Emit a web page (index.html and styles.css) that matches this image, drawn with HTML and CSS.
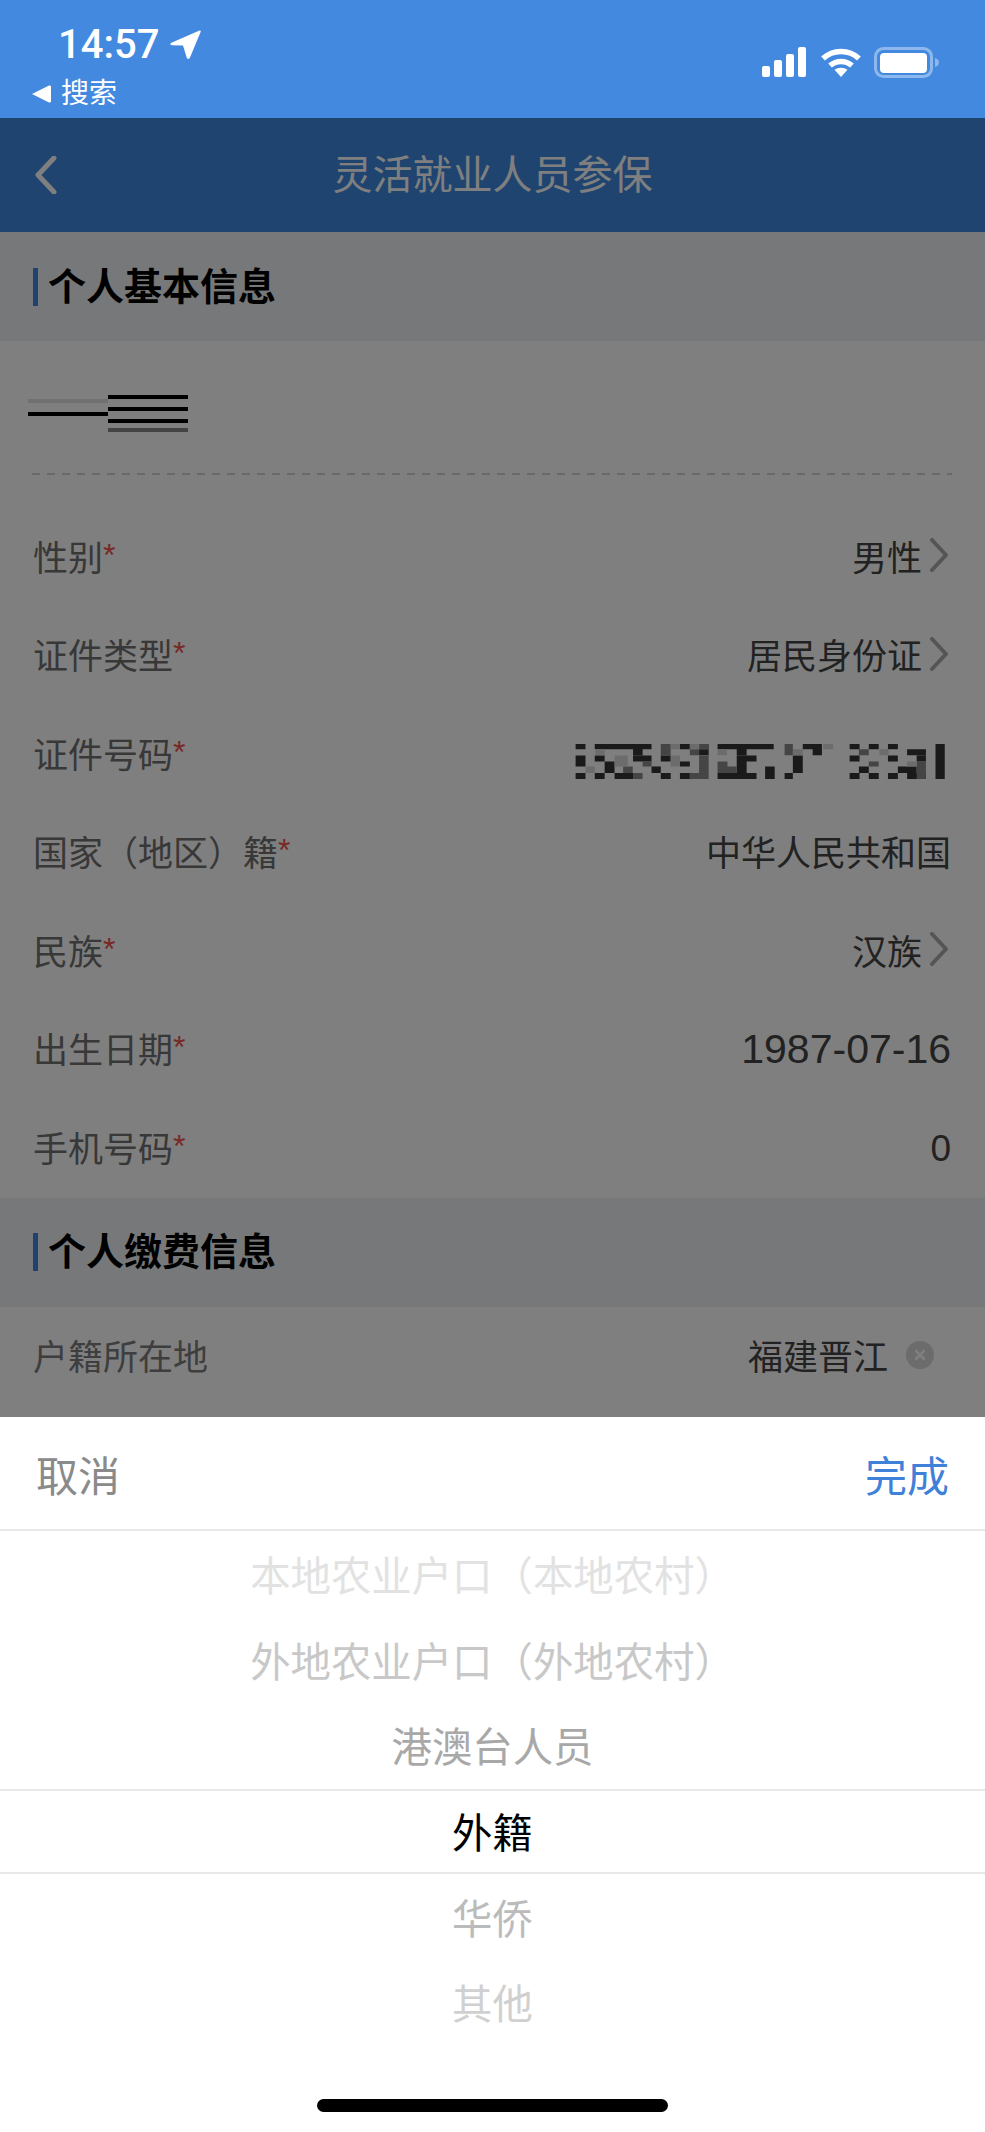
FILE: index.html
```html
<!DOCTYPE html>
<html lang="zh">
<head>
<meta charset="utf-8">
<title>灵活就业人员参保</title>
<link rel="stylesheet" href="styles.css">
</head>
<body>
<div class="phone">
  <header class="status">
    <div class="status-left">
      <div class="clock">
        <span class="time">14:57</span>
        <svg class="loc" viewBox="0 0 31 30"><path d="M29.5 .6c.8-.4 1.500.3 1.200 1.200L20 27.600c-.6 1.700-2.800 1.700-3.300 0L13 15.500 2 15.300C.3 15.200-.2 13.600 1.400 12.800z" fill="#fff"/></svg>
      </div>
      <div class="back-app">
        <svg class="back-tri" viewBox="0 0 19 18"><path d="M0 9 17 .6c1-.5 2 .1 2 1.200v14.400c0 1.100-1 1.700-2 1.200z" fill="#fff"/></svg>
        <span>搜索</span>
      </div>
    </div>
    <div class="status-right">
      <svg class="signal" viewBox="0 0 44 30" fill="#fff">
        <rect x="0" y="19" width="8" height="11" rx="2"/>
        <rect x="12" y="13" width="8" height="17" rx="2"/>
        <rect x="24" y="7" width="8" height="23" rx="2"/>
        <rect x="36" y="0" width="8" height="30" rx="2"/>
      </svg>
      <svg class="wifi" viewBox="0 0 42 30" fill="none" stroke="#fff" stroke-width="5.500">
        <path d="M3 11.500C13 2 29 2 39 11.500"/>
        <path d="M10 18.500c6.500-5.500 15.500-5.500 22 0"/>
        <path d="M21 30l-6.500-7.300c3.700-2.700 9.300-2.700 13 0z" fill="#fff" stroke="none"/>
      </svg>
      <svg class="battery" viewBox="0 0 65 31">
        <rect x="1.500" y="1.500" width="56" height="28" rx="8" fill="none" stroke="#8cb8ee" stroke-width="3"/>
        <rect x="6" y="6" width="47" height="20" rx="4" fill="#fff"/>
        <path d="M61 11c2.500.8 4 2.500 4 4.500s-1.500 3.700-4 4.500z" fill="#8cb8ee"/>
      </svg>
    </div>
  </header>

  <main class="app">
    <nav class="navbar">
      <svg class="nav-back" viewBox="0 0 22 38"><path d="M19 2 3 19l16 17" fill="none" stroke="#fff" stroke-width="5" stroke-linecap="round" stroke-linejoin="round"/></svg>
      <h1 class="nav-title">灵活就业人员参保</h1>
    </nav>

    <h2 class="section-head"><span class="section-name">个人基本信息</span></h2>
    <div class="name-block">
      <svg class="name-mosaic" viewBox="0 0 160 42">
        <rect x="0" y="4" width="80" height="4" fill="#e0e0e0"/>
        <rect x="0" y="17" width="80" height="4" fill="#000"/>
        <rect x="80" y="0" width="80" height="4" fill="#000"/>
        <rect x="80" y="12" width="80" height="4" fill="#000"/>
        <rect x="80" y="24" width="80" height="4" fill="#000"/>
        <rect x="80" y="33" width="80" height="4" fill="#888"/>
      </svg>
    </div>

    <div class="form">
      <div class="row"><span class="label">性别<i class="req">*</i></span><span class="value">男性<svg class="chev" viewBox="0 0 20 34"><path d="M3 2l14 15L3 32" fill="none"/></svg></span></div>
      <div class="row"><span class="label">证件类型<i class="req">*</i></span><span class="value">居民身份证<svg class="chev" viewBox="0 0 20 34"><path d="M3 2l14 15L3 32" fill="none"/></svg></span></div>
      <div class="row"><span class="label">证件号码<i class="req">*</i></span>
        <svg class="id-mosaic" viewBox="0 0 1120 106">
          <path fill="#343434" d="M0 0h30v16H0zM58 0h172v16H58zM316 0h30v16h-30zM430 0h170v16H430zM688 0h58v16h-58zM830 0h30v16h-30zM888 0h30v16h-30zM946 0h30v16h-30zM1090 0h28v106h-28zM174 16h29v18h-29zM374 16h29v18h-29zM488 16h30v18h-30zM718 16h28v18h-28zM1004 16h57v18h-57zM0 35h30v18H0zM58 35h30v18H58zM174 35h56v18h-56zM258 35h30v18h-30zM488 35h60v18h-60zM658 35h30v18h-30zM830 35h30v18h-30zM946 35h30v18h-30zM1033 35h28v18h-28zM0 53h30v15H0zM88 53h30v15H88zM316 53h30v15h-30zM488 53h30v15h-30zM658 53h30v15h-30zM88 68h30v20H88zM230 68h28v20h-28zM488 68h30v20h-30zM574 68h29v20h-29zM658 68h30v20h-30zM858 68h30v20h-30zM976 68h57v20h-57zM0 88h30v18H0zM58 88h30v18H58zM118 88h56v18h-56zM258 88h30v18h-30zM316 88h30v18h-30zM430 88h58v18h-58zM488 88h60v18h-60zM574 88h29v18h-29zM633 88h25v18h-25zM830 88h30v18h-30zM888 88h30v18h-30zM946 88h30v18h-30zM1004 88h57v18h-57z"/>
          <path fill="#8a8a8a" d="M258 0h30v35h-30zM374 0h30v16h-30zM633 0h25v34h-25zM346 16h28v18h-28zM858 16h30v18h-30zM374 35h29v53h-29zM203 53h27v15h-27zM430 53h30v15h-30zM888 53h30v15h-30zM1033 53h28v35h-28zM430 68h58v20h-58zM1033 88h28v18h-28zM174 88h29v18h-29zM346 88h57v18h-57zM144 68h29v20h-29z"/>
          <path fill="#d8d8d8" d="M288 0h28v16h-28zM346 0h28v16h-28zM750 0h30v16h-30zM920 16h28v18h-28zM30 68h28v20H30zM430 16h28v18h-28zM658 16h30v18h-30zM60 16h28v18H60zM118 35h40v33h-40zM288 35h28v33h-28zM1004 53h29v15h-29z"/>
        </svg>
      </div>
      <div class="row"><span class="label">国家（地区）籍<i class="req">*</i></span><span class="value">中华人民共和国</span></div>
      <div class="row"><span class="label">民族<i class="req">*</i></span><span class="value">汉族<svg class="chev" viewBox="0 0 20 34"><path d="M3 2l14 15L3 32" fill="none"/></svg></span></div>
      <div class="row"><span class="label">出生日期<i class="req">*</i></span><span class="value value-num">1987-07-16</span></div>
      <div class="row"><span class="label">手机号码<i class="req">*</i></span><span class="value value-num value-zero">0</span></div>
    </div>

    <h2 class="section-head"><span class="section-name">个人缴费信息</span></h2>
    <div class="row row-plain">
      <span class="label label-plain">户籍所在地</span>
      <span class="value value-clear">福建晋江
        <svg class="clear" viewBox="0 0 28 28"><circle cx="14" cy="14" r="14" fill="#d8d8d8"/><path d="M10 10l8 8M18 10l-8 8" stroke="#fff" stroke-width="2.600" stroke-linecap="round"/></svg>
      </span>
    </div>
    <div class="backdrop"></div>
  </main>

  <section class="sheet">
    <div class="sheet-head">
      <span class="cancel">取消</span>
      <span class="done">完成</span>
    </div>
    <ul class="picker">
      <li class="opt opt-3">本地农业户口（本地农村）</li>
      <li class="opt opt-2">外地农业户口（外地农村）</li>
      <li class="opt opt-1">港澳台人员</li>
      <li class="opt opt-sel">外籍</li>
      <li class="opt opt-1b">华侨</li>
      <li class="opt opt-2b">其他</li>
    </ul>
    <div class="home"></div>
  </section>
</div>
</body>
</html>
```

FILE: styles.css
```css
* { box-sizing: border-box; }
html, body { margin: 0; padding: 0; }
body {
  background: #fff;
  font-family: "Liberation Sans", "Noto Sans CJK SC", sans-serif;
}
.phone {
  position: relative;
  width: 985px;
  height: 2132px;
  overflow: hidden;
  background: #fff;
}

/* status bar */
.status {
  height: 118px;
  background: #4389e0;
  color: #fff;
  display: flex;
  justify-content: space-between;
  padding: 26px 46px 0 32px;
}
.status-left { display: flex; flex-direction: column; }
.clock { display: flex; align-items: center; gap: 11px; padding-left: 26px; height: 38px; }
.time { font: 500 40px/38px Roboto, sans-serif; }
.loc { width: 31px; height: 30px; }
.back-app { display: flex; align-items: center; gap: 10px; font-size: 28px; line-height: 36px; margin-top: 12px; }
.back-tri { width: 19px; height: 18px; }
.status-right { display: flex; align-items: flex-start; padding-top: 21px; }
.signal { width: 44px; height: 30px; margin-right: 14px; }
.wifi { width: 42px; height: 30px; margin-right: 12px; }
.battery { width: 65px; height: 31px; }

/* app under the dim layer */
.app { position: relative; height: 1299px; overflow: hidden; background: #fff; }
.navbar {
  height: 114px;
  background: #3e88e0;
  display: flex;
  align-items: center;
  justify-content: center;
  position: relative;
}
.nav-back { position: absolute; left: 35px; top: 38px; width: 22px; height: 38px; }
.nav-title { margin: 0; color: #fff; font-size: 40px; font-weight: 400; line-height: 1.2; }
.section-head {
  height: 109px;
  margin: 0;
  background: #eff0f3;
  display: flex;
  align-items: center;
  padding-left: 33px;
}
.section-name {
  border-left: 5px solid #3f85e0;
  padding-left: 10px;
  font-size: 38px;
  font-weight: 700;
  line-height: 38px;
  color: #000;
}
.name-block {
  height: 134px;
  padding-top: 54px;
  background: repeating-linear-gradient(90deg, #d2d2d2 0 8px, transparent 8px 15px) 32px 100% / 920px 2px no-repeat;
}
.name-mosaic { display: block; width: 160px; height: 42px; margin-left: 28px; }
.form { padding-top: 33px; }
.row {
  height: 98.500px;
  display: flex;
  align-items: center;
  justify-content: space-between;
  padding: 0 34px 4px 33px;
  font-size: 35px;
}
.label { color: #707070; }
.req { color: #f0504a; font-style: normal; font-size: 32px; line-height: 1; vertical-align: 5px; }
.value { color: #444; display: flex; align-items: center; }
.value-num { font-size: 41px; padding-top: 3px; }
.value-zero { font-size: 37px; padding-top: 5px; }
.chev { width: 20px; height: 34px; margin-left: 7px; margin-right: 2px; stroke: #aaa; stroke-width: 4; stroke-linecap: round; stroke-linejoin: round; }
.id-mosaic { width: 373px; height: 35px; margin: 18px 4px 0 0; filter: blur(.5px); }
.row-plain { height: 104px; padding-bottom: 8px; }
.label-plain { color: #7c7c7c; }
.value-clear { gap: 18px; margin-right: 17px; }
.clear { width: 28px; height: 28px; }

/* dim layer: covers the whole form */
.backdrop { position: absolute; inset: 0; background: rgba(0, 0, 0, .5); }

/* picker sheet */
.sheet { position: relative; height: 715px; background: #fff; }
.sheet-head {
  height: 114px;
  border-bottom: 2px solid #e8e8e8;
  display: flex;
  align-items: center;
  justify-content: space-between;
  padding: 0 36px;
  font-size: 42px;
}
.cancel { color: #8a8a8a; }
.done { color: #3f80d8; }
.picker { list-style: none; margin: 0; padding: 1px 0 0; }
.opt { height: 85.600px; padding-bottom: 2px; display: flex; align-items: center; justify-content: center; font-size: 40.400px; }
.opt-3 { color: #e2e2e2; }
.opt-2 { color: #c8c8c8; }
.opt-1 { color: #a8a8a8; }
.opt-sel { color: #000; border-top: 2px solid #e8e8e8; border-bottom: 2px solid #e8e8e8; }
.opt-1b { color: #bbb; }
.opt-2b { color: #d0d0d0; }
.home { position: absolute; left: 317px; bottom: 20px; width: 351px; height: 13px; border-radius: 7px; background: #000; }
```
